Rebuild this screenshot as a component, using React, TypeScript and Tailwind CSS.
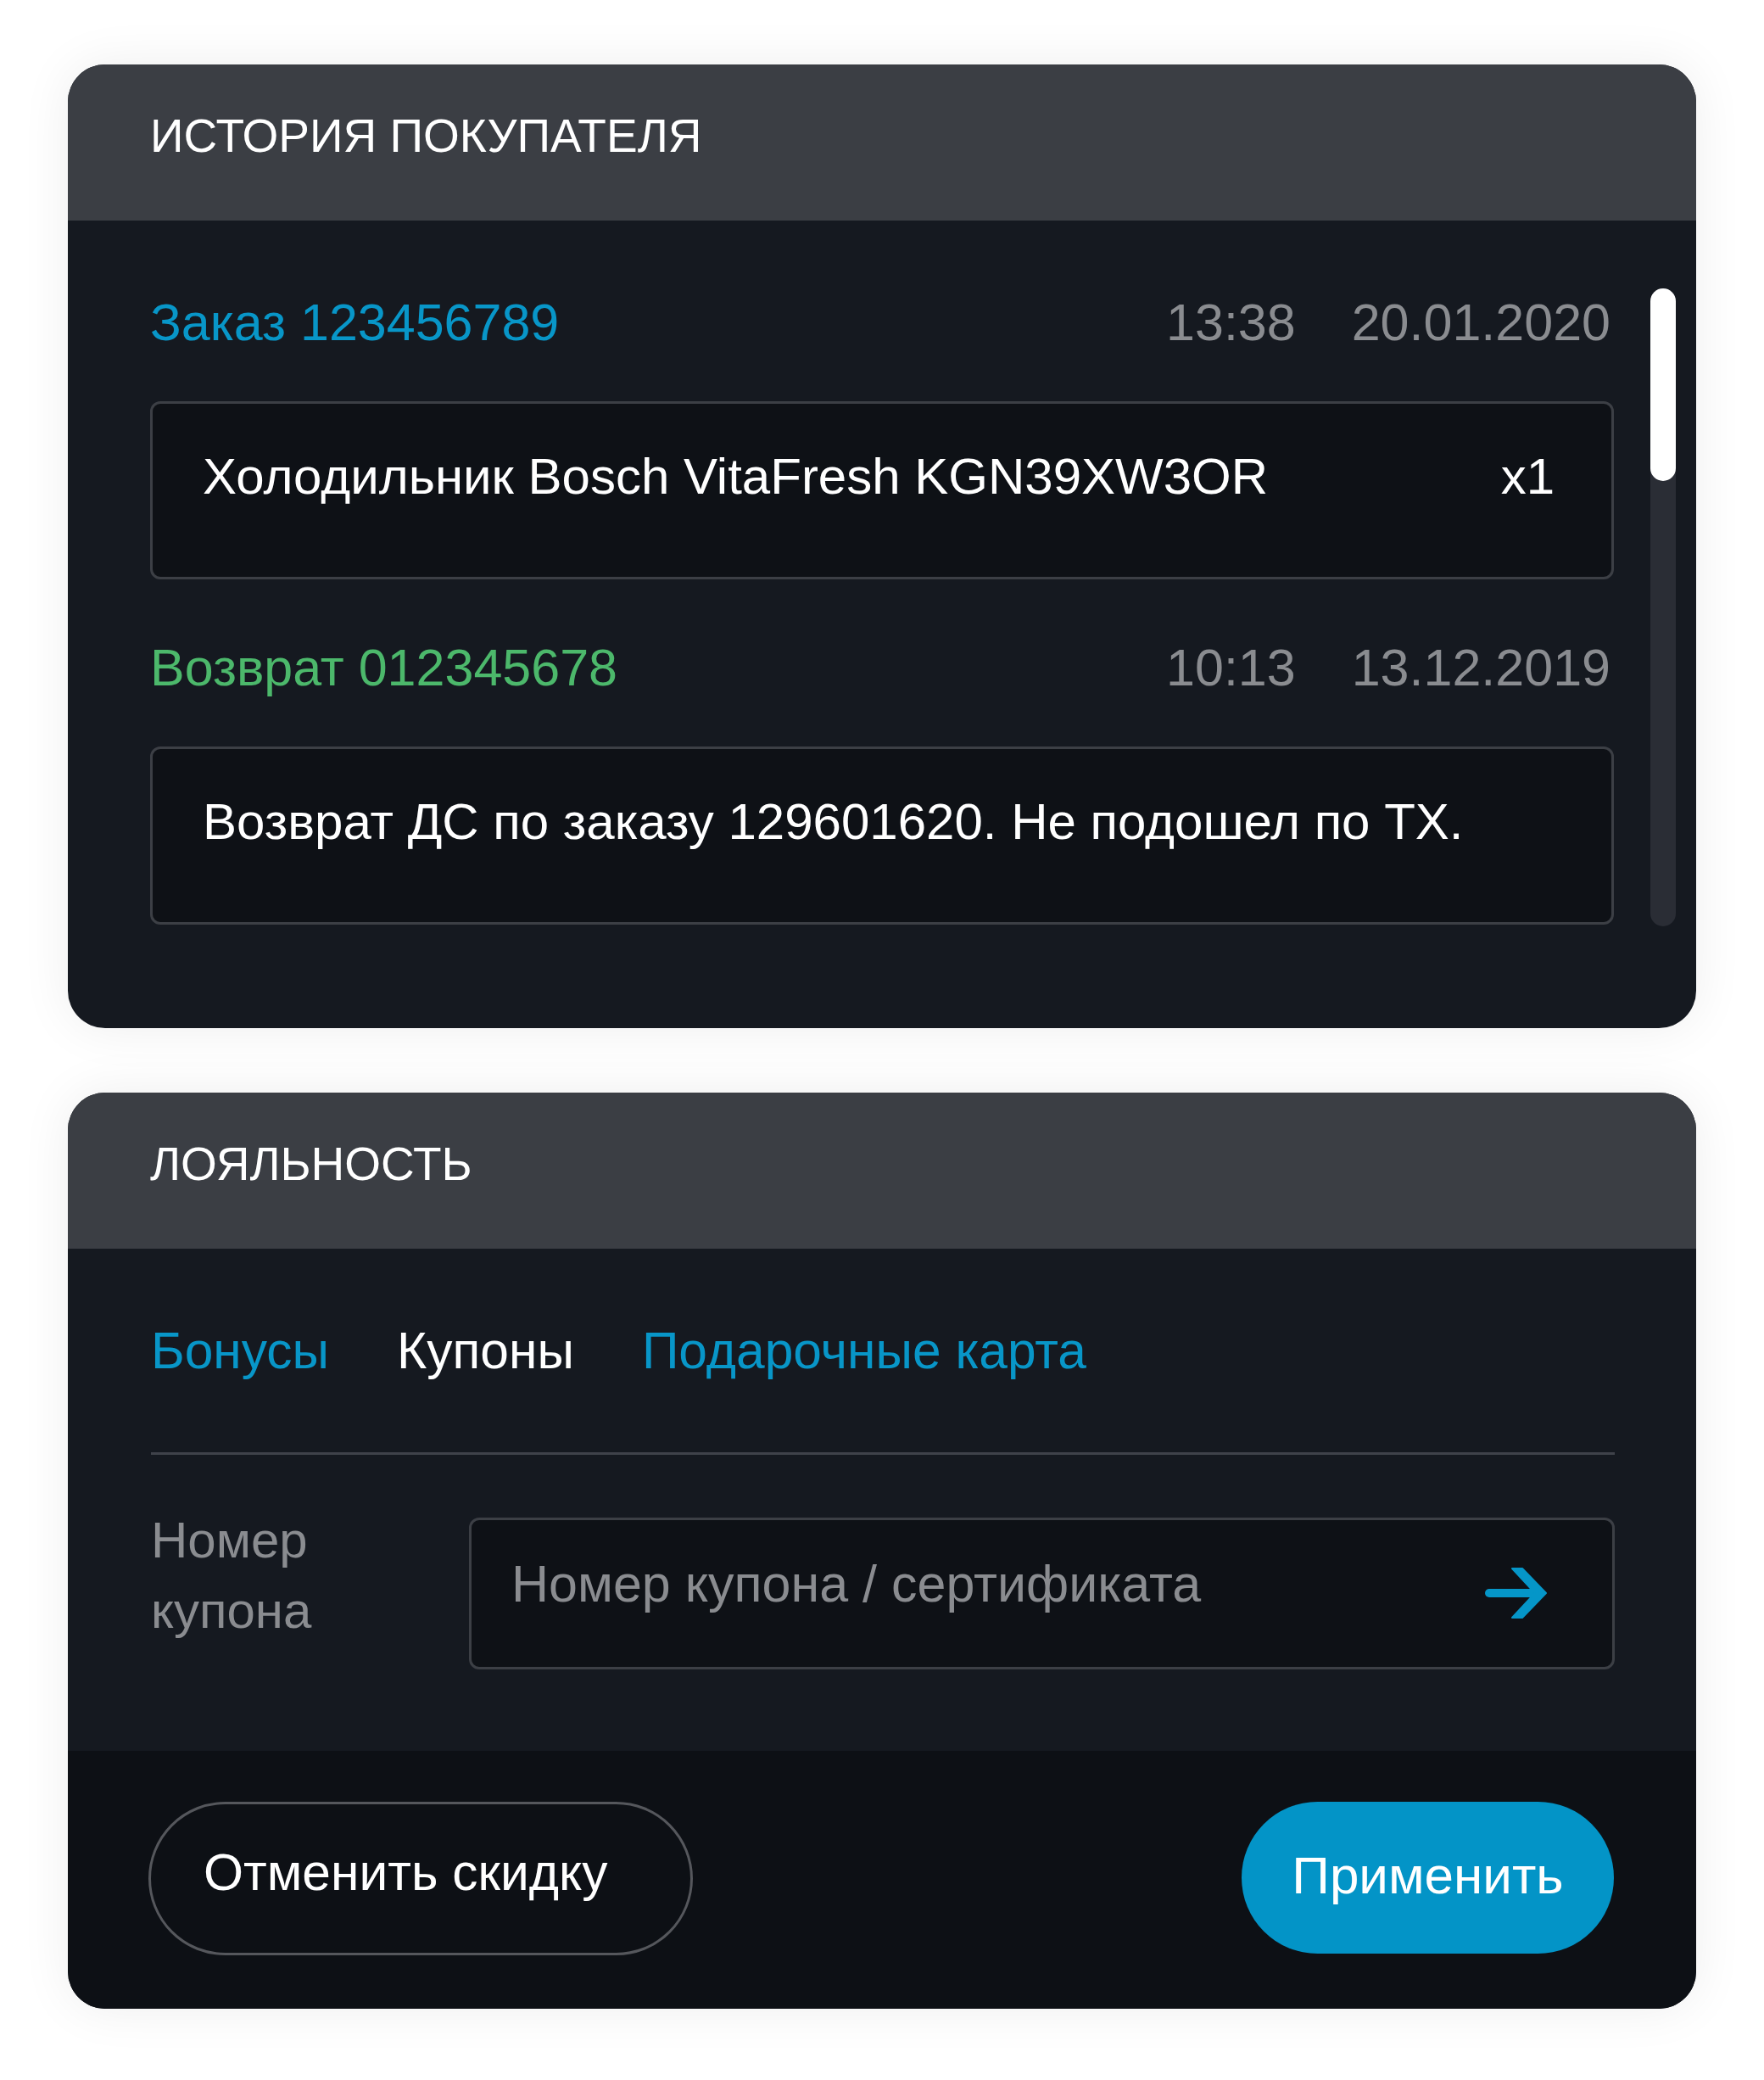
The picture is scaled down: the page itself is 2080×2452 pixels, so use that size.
const font = { fontFamily: '"Liberation Sans", Arial, sans-serif' }

type Entry = {
  title: string
  kind: 'order' | 'return'
  time: string
  date: string
  text: string
  qty?: string
}

const history: Entry[] = [
  {
    title: 'Заказ 123456789',
    kind: 'order',
    time: '13:38',
    date: '20.01.2020',
    text: 'Холодильник Bosch VitaFresh KGN39XW3OR',
    qty: 'x1',
  },
  {
    title: 'Возврат 012345678',
    kind: 'return',
    time: '10:13',
    date: '13.12.2019',
    text: 'Возврат ДС по заказу 129601620. Не подошел по ТХ.',
  },
]

function CardHeader({ title }: { title: string }) {
  return (
    <div className="h-[184px] bg-[#3b3e44] pl-[97px] pt-[57px]">
      <h2 className="text-[55px] leading-none text-white">{title}</h2>
    </div>
  )
}

function Arrow() {
  return (
    <svg width="76" height="64" viewBox="0 0 76 64" className="ml-auto shrink-0" fill="#0596c8">
      <path d="M6 32H62" stroke="#0596c8" strokeWidth="10" strokeLinecap="round" />
      <polygon points="33,3 45,3 73,32 45,61 33,61 60,32" stroke="#0596c8" strokeWidth="2" strokeLinejoin="round" />
    </svg>
  )
}

export default function App() {
  return (
    <div className="min-h-[2452px] bg-white px-[80px] pt-[76px]" style={font}>
      <div className="flex flex-col gap-[76px]">
        {/* История */}
        <div className="overflow-hidden rounded-[44px] bg-[#151920] shadow-[0_0_60px_rgba(0,0,0,0.07)]">
          <CardHeader title="ИСТОРИЯ ПОКУПАТЕЛЯ" />
          <div className="flex pl-[97px] pr-[24px] pt-[80px] pb-[120px]">
            <div className="mt-[10px] flex-1">
              {history.map((item, i) => (
                <div key={item.title} className={i > 0 ? 'mt-[74px]' : ''}>
                  <div className="flex h-[60px] items-start text-[61px] leading-none">
                    <span className={item.kind === 'order' ? 'text-[#0896c8]' : 'text-[#4cb86b]'}>
                      {item.title}
                    </span>
                    <div className="ml-auto mr-[4px] flex gap-[66px] text-[#8a8c90]">
                      <span>{item.time}</span>
                      <span>{item.date}</span>
                    </div>
                  </div>
                  <div className="mt-[63px] flex h-[210px] items-start rounded-[12px] border-[3px] border-[#3c3f45] bg-[#0e1116] pl-[59px] pr-[67px] pt-[56px]">
                    <span className="text-[60px] leading-none text-white">{item.text}</span>
                    {item.qty && <span className="ml-auto text-[60px] leading-none text-white">{item.qty}</span>}
                  </div>
                </div>
              ))}
            </div>
            <div className="ml-[43px] h-[752px] w-[30px] rounded-full bg-[#2a2d35]">
              <div className="h-[227px] w-[30px] rounded-full bg-white" />
            </div>
          </div>
        </div>

        {/* Лояльность */}
        <div className="overflow-hidden rounded-[44px] bg-[#151920] shadow-[0_0_60px_rgba(0,0,0,0.07)]">
          <CardHeader title="ЛОЯЛЬНОСТЬ" />
          <div className="pl-[98px] pr-[96px] pt-[90px] pb-[96px]">
            <div className="flex gap-[80px] text-[60.5px] leading-none">
              <span className="text-[#0896c8]">Бонусы</span>
              <span className="text-white">Купоны</span>
              <span className="text-[#0896c8]">Подарочные карта</span>
            </div>
            <div className="mt-[89px] h-[3px] bg-[#3f424a]" />
            <div className="mt-[59px] flex items-start">
              <div className="w-[375px] text-[60px] leading-[83px] text-[#8a8c90]">
                Номер
                <br />
                купона
              </div>
              <div className="mt-[15px] flex h-[179px] flex-1 items-center rounded-[12px] border-[3px] border-[#3c3f45] bg-[#0e1116] pl-[47px] pr-[75px]">
                <span className="mb-[21px] text-[61px] leading-none text-[#8a8c90]">
                  Номер купона / сертификата
                </span>
                <Arrow />
              </div>
            </div>
          </div>
          <div className="flex items-start bg-[#0d1015] pl-[95px] pr-[97px] pt-[60px] pb-[63px]">
            <button className="flex h-[181px] w-[642px] items-center rounded-full border-[3px] border-[#55575c] pb-[14px] pl-[62px] text-[60.5px] leading-none text-white">
              Отменить скидку
            </button>
            <button className="ml-auto flex h-[179px] w-[439px] items-center justify-center rounded-full bg-[#0394c7] pb-[5px] text-[62px] leading-none text-white">
              Применить
            </button>
          </div>
        </div>
      </div>
    </div>
  )
}
